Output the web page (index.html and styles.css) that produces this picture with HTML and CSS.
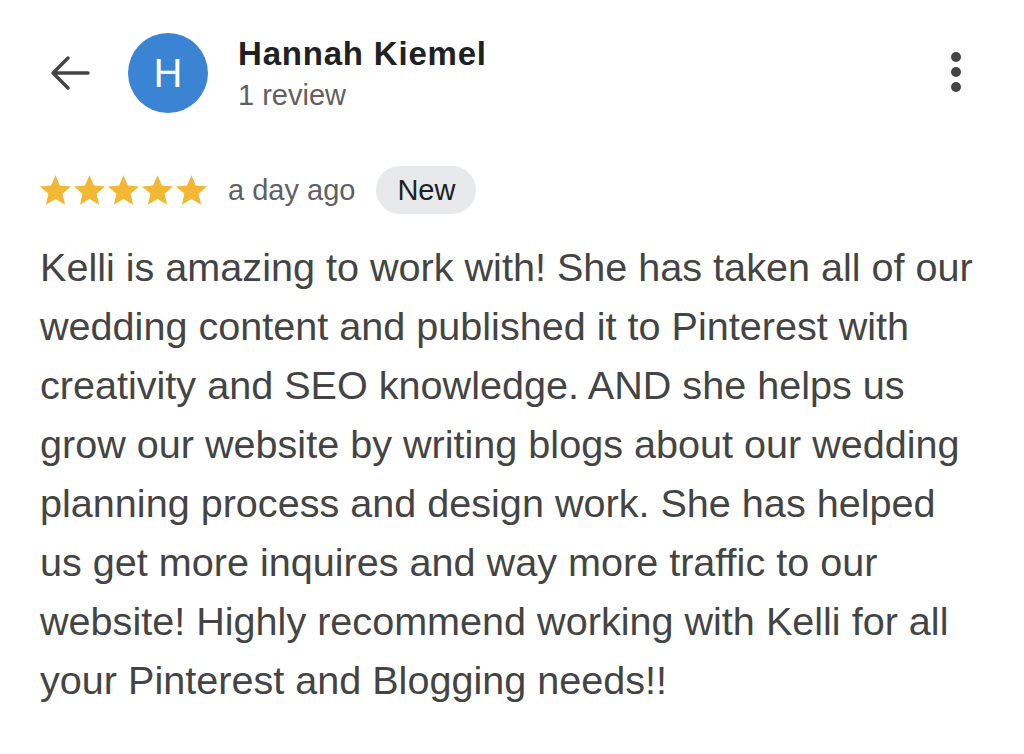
FILE: index.html
```html
<!DOCTYPE html>
<html>
<head>
<meta charset="utf-8">
<link rel="stylesheet" href="styles.css">
</head>
<body>
<div class="page">
  <header class="top">
    <button class="back" aria-label="Back">
      <svg width="42" height="36" viewBox="0 0 42 36"><path d="M40 18H5M20 3L5 18l15 15" fill="none" stroke="#444" stroke-width="3.4" stroke-linecap="round" stroke-linejoin="round"/></svg>
    </button>
    <div class="avatar">H</div>
    <div class="who">
      <div class="name">Hannah Kiemel</div>
      <div class="count">1 review</div>
    </div>
    <div class="more" aria-label="More">
      <span></span><span></span><span></span>
    </div>
  </header>
  <div class="meta">
    <div class="stars">
      <svg viewBox="2 2 20 19.3"><path d="M12 2.2l2.9 6.6 7.1.6-5.4 4.7 1.6 7-6.2-3.7-6.2 3.7 1.6-7L2 9.4l7.1-.6z"/></svg>
      <svg viewBox="2 2 20 19.3"><path d="M12 2.2l2.9 6.6 7.1.6-5.4 4.7 1.6 7-6.2-3.7-6.2 3.7 1.6-7L2 9.4l7.1-.6z"/></svg>
      <svg viewBox="2 2 20 19.3"><path d="M12 2.2l2.9 6.6 7.1.6-5.4 4.7 1.6 7-6.2-3.7-6.2 3.7 1.6-7L2 9.4l7.1-.6z"/></svg>
      <svg viewBox="2 2 20 19.3"><path d="M12 2.2l2.9 6.6 7.1.6-5.4 4.7 1.6 7-6.2-3.7-6.2 3.7 1.6-7L2 9.4l7.1-.6z"/></svg>
      <svg viewBox="2 2 20 19.3"><path d="M12 2.2l2.9 6.6 7.1.6-5.4 4.7 1.6 7-6.2-3.7-6.2 3.7 1.6-7L2 9.4l7.1-.6z"/></svg>
    </div>
    <span class="when">a day ago</span>
    <span class="pill">New</span>
  </div>
  <p class="review">Kelli is amazing to work with! She has taken all of our wedding content and published it to Pinterest with creativity and SEO knowledge. AND she helps us grow our website by writing blogs about our wedding planning process and design work. She has helped us get more inquires and way more traffic to our website! Highly recommend working with Kelli for all your Pinterest and Blogging needs!!</p>
</div>
</body>
</html>
```
FILE: styles.css
```css
html, body {
  margin: 0;
  padding: 0;
  background: #fff;
}
body {
  font-family: "Liberation Sans", Arial, sans-serif;
  color: #3c3c3c;
}
.page {
  padding: 33px 40px 0 40px;
  width: 1024px;
  box-sizing: border-box;
}
.top {
  display: flex;
  align-items: center;
  height: 80px;
}
.back {
  border: 0;
  background: none;
  padding: 0;
  margin: 0 0 0 8px;
  width: 42px;
  height: 36px;
  display: flex;
}
.avatar {
  width: 80px;
  height: 80px;
  border-radius: 50%;
  background: #3b84d3;
  color: #fff;
  font-size: 40px;
  display: flex;
  align-items: center;
  justify-content: center;
  margin-left: 38px;
}
.who {
  margin-left: 30px;
  flex: 1;
  align-self: flex-start;
  margin-top: 1px;
}
.name {
  font-weight: bold;
  font-size: 33px;
  letter-spacing: 0.8px;
  color: #202124;
  line-height: 40px;
}
.count {
  font-size: 29px;
  color: #5f6063;
  line-height: 30px;
  margin-top: 6px;
}
.more {
  display: flex;
  flex-direction: column;
  gap: 5px;
  margin-right: 23px;
  margin-top: -2px;
}
.more span {
  width: 10px;
  height: 10px;
  border-radius: 50%;
  background: #444;
}
.meta {
  display: flex;
  align-items: center;
  margin-top: 53px;
  height: 48px;
}
.stars {
  display: flex;
  gap: 3px;
}
.stars svg {
  width: 31px;
  height: 30px;
  fill: #f2b833;
}
.when {
  font-size: 29px;
  color: #5f6063;
  margin-left: 21px;
}
.pill {
  margin-left: 21px;
  background: #e8e9eb;
  border-radius: 24px;
  height: 48px;
  padding: 0 21px;
  display: flex;
  align-items: center;
  font-size: 29px;
  color: #202124;
}
.review {
  margin: 24px 0 0 0;
  font-size: 39.6px;
  line-height: 59px;
  color: #444;
  width: 944px;
}
```
